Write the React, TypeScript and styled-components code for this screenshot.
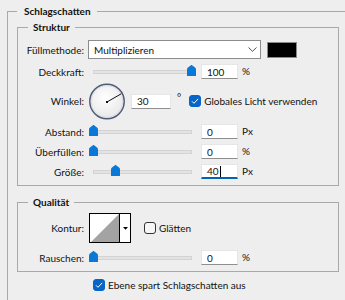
import React, { FC } from 'react';
import styled, { createGlobalStyle } from 'styled-components';

const GlobalStyle = createGlobalStyle`
  html, body {
    margin: 0;
    padding: 0;
    background: #eeeeee;
  }
  body {
    font-family: 'Lato', 'Noto Sans', sans-serif;
    font-size: 10px;
    color: #111111;
  }
`;

const Thumb = () => (
  <svg width="9" height="11" viewBox="0 0 9 11">
    <path
      d="M0 11V4.5C0 3.6 0.4 3 1 2.5L3.6 0.4C4.1 0 4.9 0 5.4 0.4L8 2.5C8.6 3 9 3.6 9 4.5V11Z"
      fill="#0a78d7"
    />
  </svg>
);

const CheckMark = () => (
  <svg width="12" height="12" viewBox="0 0 12 12">
    <path d="M3 6.3L5 8.3L9.2 3.8" fill="none" stroke="#fff" strokeWidth="1" />
  </svg>
);

const Chevron = () => (
  <svg width="9" height="5" viewBox="0 0 9 5">
    <path d="M0.5 0.5L4.5 4.3L8.5 0.5" fill="none" stroke="#555" strokeWidth="1" />
  </svg>
);

const Dial: FC<{ angle: number }> = ({ angle }) => {
  const r = 16.5;
  const rad = (angle * Math.PI) / 180;
  const x = 18 + r * Math.cos(rad);
  const y = 19 - r * Math.sin(rad);
  return (
    <svg width="37" height="37" viewBox="0 0 37 37">
      <defs>
        <radialGradient id="dialFill" cx="45%" cy="40%" r="65%">
          <stop offset="0%" stopColor="#ffffff" />
          <stop offset="100%" stopColor="#e6e6e6" />
        </radialGradient>
      </defs>
      <circle cx="18" cy="18.5" r="17.2" fill="url(#dialFill)" stroke="#4f5a77" strokeWidth="1.5" />
      <circle cx="18" cy="18.5" r="15.9" fill="none" stroke="#c9ccd6" strokeWidth="0.6" />
      <line x1="18" y1="19" x2={x} y2={y} stroke="#111" strokeWidth="1" />
      <rect x="17" y="18" width="2" height="2" fill="#111" />
    </svg>
  );
};

const ContourPreview = () => (
  <svg width="40" height="28" viewBox="0 0 40 28">
    <rect x="0" y="0" width="40" height="28" fill="#fff" />
    <polygon points="1,28 29,0 29,28" fill="#a3a3a3" />
    <rect x="29" y="0" width="1" height="28" fill="#000" />
    <polygon points="33,13 38,13 35.5,15.8" fill="#000" />
  </svg>
);

interface SliderProps {
  pos: number;
}

const Slider: FC<SliderProps> = ({ pos }) => (
  <SliderWrap>
    <Track />
    <ThumbHolder $left={Math.round(pos * 98)}>
      <Thumb />
    </ThumbHolder>
  </SliderWrap>
);

interface FieldProps {
  value: string;
  focused?: boolean;
  wide?: boolean;
}

const NumberField: FC<FieldProps> = ({ value, focused, wide }) => (
  <Field $focused={focused} $wide={wide}>
    {value}
    {focused && <Caret />}
  </Field>
);

const SliderRow: FC<{ label: string; pos: number; value: string; unit: string; focused?: boolean }> = ({
  label,
  pos,
  value,
  unit,
  focused,
}) => (
  <Row>
    <Label>{label}</Label>
    <Slider pos={pos} />
    <NumberField value={value} focused={focused} />
    <Unit>{unit}</Unit>
  </Row>
);

export default function App() {
  return (
    <Page>
      <GlobalStyle />
      <OuterGroup>
        <OuterLegend>Schlagschatten</OuterLegend>

        <Section>
          <SectionLegend>Struktur</SectionLegend>
          <StructureBody>
            <Row>
              <Label>Füllmethode:</Label>
              <Select>
                <span>Multiplizieren</span>
                <Chevron />
              </Select>
              <Swatch />
            </Row>
            <SliderRow label="Deckkraft:" pos={1} value="100" unit="%" />
            <AngleRow>
              <Label>Winkel:</Label>
              <Dial angle={30} />
              <AngleField>
                <NumberField value="30" wide />
              </AngleField>
              <Degree>°</Degree>
              <CheckLabel>
                <Box $checked>
                  <CheckMark />
                </Box>
                Globales Licht verwenden
              </CheckLabel>
            </AngleRow>
            <SliderRow label="Abstand:" pos={0} value="0" unit="Px" />
            <SliderRow label="Überfüllen:" pos={0} value="0" unit="%" />
            <SliderRow label="Größe:" pos={0.225} value="40" unit="Px" focused />
          </StructureBody>
        </Section>

        <QualitySection>
          <SectionLegend>Qualität</SectionLegend>
          <QualityBody>
            <Row>
              <Label>Kontur:</Label>
              <ContourBox>
                <ContourPreview />
              </ContourBox>
              <SmoothLabel>
                <Box />
                Glätten
              </SmoothLabel>
            </Row>
            <SliderRow label="Rauschen:" pos={0} value="0" unit="%" />
          </QualityBody>
        </QualitySection>

        <KnockoutLabel>
          <Box $checked>
            <CheckMark />
          </Box>
          Ebene spart Schlagschatten aus
        </KnockoutLabel>
      </OuterGroup>
    </Page>
  );
}

const Page = styled.div`
  width: 345px;
  height: 300px;
  overflow: hidden;
  padding-top: 3px;
  box-sizing: border-box;
`;

const OuterGroup = styled.fieldset`
  margin: 0 0 0 7px;
  padding: 0 0 0 9px;
  min-width: 0;
  height: 360px;
  border: 1px solid #a9a9a9;
  border-right: 0;
  border-bottom: 0;
`;

const OuterLegend = styled.legend`
  padding: 0 6px 0 7px;
  line-height: 16px;
  font-weight: 700;
  font-size: 10px;
`;

const Section = styled.fieldset`
  margin: 0;
  padding: 0;
  width: 322px;
  box-sizing: border-box;
  min-width: 0;
  border: 1px solid #a9a9a9;
`;

const QualitySection = styled(Section)`
  margin-top: 8px;
`;

const SectionLegend = styled.legend`
  margin-left: 10px;
  padding: 0 5px;
  line-height: 16px;
  font-weight: 700;
  font-size: 10px;
`;

const StructureBody = styled.div`
  display: flex;
  flex-direction: column;
  gap: 5px;
  padding: 5px 0 6px;
`;

const QualityBody = styled.div`
  display: flex;
  flex-direction: column;
  gap: 7px;
  padding: 3px 0 6px;
`;

const Row = styled.div`
  display: flex;
  align-items: center;
`;

const AngleRow = styled(Row)`
  margin-top: -1px;
  height: 36px;
`;

const Label = styled.span`
  width: 66px;
  margin-right: 5px;
  text-align: right;
  white-space: nowrap;
`;

const Select = styled.div`
  display: flex;
  align-items: center;
  justify-content: space-between;
  width: 173px;
  height: 19px;
  margin-left: -1px;
  padding: 0 3px 0 5px;
  box-sizing: border-box;
  background: #ffffff;
  border: 1px solid #8c8c8c;
`;

const Swatch = styled.div`
  width: 30px;
  height: 16px;
  margin-left: 6px;
  box-sizing: border-box;
  background: #000000;
  border: 1px solid #8a8a8a;
`;

const SliderWrap = styled.div`
  position: relative;
  width: 107px;
  height: 15px;
`;

const Track = styled.div`
  margin: 6px 0 0 4px;
  width: 99px;
  height: 4px;
  box-sizing: border-box;
  background: #e3e3e3;
  border: 1px solid #d3d3d3;
`;

const ThumbHolder = styled.div<{ $left: number }>`
  position: absolute;
  top: 1px;
  left: ${({ $left }) => $left}px;
  line-height: 0;
`;

const Field = styled.div<{ $focused?: boolean; $wide?: boolean }>`
  display: flex;
  align-items: center;
  width: ${({ $wide }) => ($wide ? 40 : 37)}px;
  height: 15px;
  margin-left: ${({ $wide }) => ($wide ? 0 : 5)}px;
  padding-left: 5px;
  box-sizing: border-box;
  background: #ffffff;
  border: 1px solid #e6e6e6;
  border-bottom: ${({ $focused }) => ($focused ? '2px solid #0063b8' : '1px solid #8f8f8f')};
`;

const Caret = styled.span`
  width: 1px;
  height: 11px;
  margin-left: 1px;
  background: #000;
`;

const Unit = styled.span`
  margin-left: 4px;
  margin-top: -2px;
`;

const AngleField = styled.div`
  margin-left: 5px;
`;

const Degree = styled.span`
  margin-left: 6px;
  align-self: flex-start;
  margin-top: 8px;
`;

const Box = styled.span<{ $checked?: boolean }>`
  display: inline-flex;
  width: 12px;
  height: 12px;
  box-sizing: border-box;
  border-radius: 3px;
  background: ${({ $checked }) => ($checked ? '#0565c9' : '#f6f6f6')};
  border: 1px solid ${({ $checked }) => ($checked ? '#0565c9' : '#333333')};
  align-items: center;
  justify-content: center;

  svg {
    flex: none;
  }
`;

const CheckLabel = styled.span`
  display: flex;
  align-items: center;
  gap: 3px;
  margin-left: 8px;
  white-space: nowrap;
`;

const ContourBox = styled.div`
  width: 42px;
  height: 30px;
  box-sizing: border-box;
  border: 1px solid #000000;
  line-height: 0;
`;

const SmoothLabel = styled(CheckLabel)`
  margin-left: 13px;
`;

const KnockoutLabel = styled.div`
  display: flex;
  align-items: center;
  gap: 3px;
  margin: 6px 0 0 76px;
  height: 13px;
`;
